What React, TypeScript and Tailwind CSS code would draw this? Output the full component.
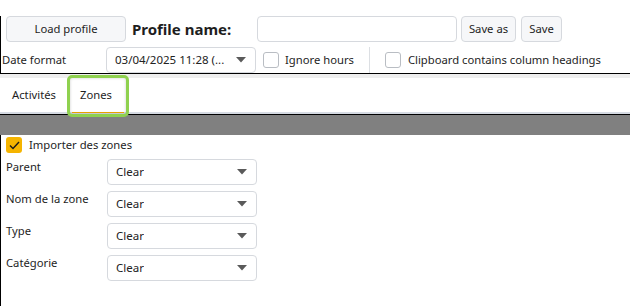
import React from 'react'

const font = { fontFamily: '"Noto Sans", "Open Sans", sans-serif' }

function Arrow() {
    return (
        <svg width="10" height="6" viewBox="0 0 10 6" className="shrink-0">
            <path d="M0 0 L10 0 L5 5.5 Z" fill="#5a5a5a" />
        </svg>
    )
}

function Select({ value, className = '' }: { value: string; className?: string }) {
    return (
        <div
            className={`flex h-[26px] w-[150px] items-center justify-between rounded-[4px] border border-[#d6d9de] bg-white pl-[8px] pr-[9px] text-[11.5px] text-[#222] ${className}`}
        >
            <span className="truncate">{value}</span>
            <Arrow />
        </div>
    )
}

function Check({ checked = false }: { checked?: boolean }) {
    if (checked) {
        return (
            <div className="flex h-[16px] w-[16px] shrink-0 items-center justify-center rounded-[3px] bg-[#f5b400]">
                <svg width="11" height="9" viewBox="0 0 11 9">
                    <path d="M1 4.5 L4 7.5 L10 1" fill="none" stroke="#1a1a1a" strokeWidth="1.4" />
                </svg>
            </div>
        )
    }
    return <div className="h-[16px] w-[16px] shrink-0 rounded-[3px] border border-[#b9bdc3] bg-white" />
}

export default function App() {
    const rows = ['Parent', 'Nom de la zone', 'Type', 'Catégorie']

    return (
        <div className="relative h-[306px] w-[630px] overflow-hidden bg-white text-[11.25px] text-[#1e1e1e]" style={font}>
            <div className="h-[4px]" />
            <div className="border-b border-l border-black">
                <div className="mt-[12px] flex h-[26px] items-center pl-[5px]">
                    <button className="h-[26px] w-[120px] rounded-[4px] border border-[#d6d9de] bg-[#f6f7f9]">
                        Load profile
                    </button>
                    <span className="ml-[6px] w-[125px] text-[15px] font-bold leading-none">Profile name:</span>
                    <div className="h-[26px] w-[200px] rounded-[4px] border border-[#d6d9de] bg-white" />
                    <button className="ml-[4px] h-[26px] w-[55px] rounded-[4px] border border-[#d6d9de] bg-[#f6f7f9]">
                        Save as
                    </button>
                    <button className="ml-[5px] h-[26px] w-[41px] rounded-[4px] border border-[#d6d9de] bg-[#f6f7f9]">
                        Save
                    </button>
                </div>
                <div className="mt-[5px] flex h-[26px] items-center">
                    <span className="w-[105px] pl-[1px]">Date format</span>
                    <Select value="03/04/2025 11:28 (..." className="w-[149px]" />
                    <div className="ml-[7px] flex items-center gap-[6px]">
                        <Check />
                        <span>Ignore hours</span>
                    </div>
                    <div className="ml-[15px] h-[26px] w-px bg-[#dcdfe3]" />
                    <div className="ml-[15px] flex items-center gap-[7px]">
                        <Check />
                        <span>Clipboard contains column headings</span>
                    </div>
                </div>
            </div>
            <div className="h-[4px] bg-[#eeeeee]" />
            <div className="flex h-[34px] items-end bg-white pb-[8px]">
                <span className="ml-[12px]">Activités</span>
                <span className="ml-[24px]">Zones</span>
            </div>
            <div className="h-[2px] bg-[#d5dae2]" />
            <div className="h-px bg-black" />
            <div className="h-[20px] bg-[#808080]" />
            <div className="h-[200px] border-l border-black">
                <div className="flex items-center gap-[7px] pl-[5px] pt-[2px]">
                    <Check checked />
                    <span>Importer des zones</span>
                </div>
                <div className="mt-[5px] flex flex-col gap-[6px]">
                    {rows.map((r) => (
                        <div key={r} className="flex items-start">
                            <span className="w-[106px] pl-[5px] leading-[16px]">{r}</span>
                            <Select value="Clear" />
                        </div>
                    ))}
                </div>
            </div>

            <div className="pointer-events-none absolute left-[67px] top-[75px] h-[42px] w-[62px] rounded-[5px] border-[3px] border-[#8fd14f] shadow-[inset_0_0_3px_rgba(0,0,0,0.2)]">
                <div className="absolute bottom-[1px] left-[2px] right-[2px] h-[1px] bg-[#e8a000]" />
            </div>
        </div>
    )
}
